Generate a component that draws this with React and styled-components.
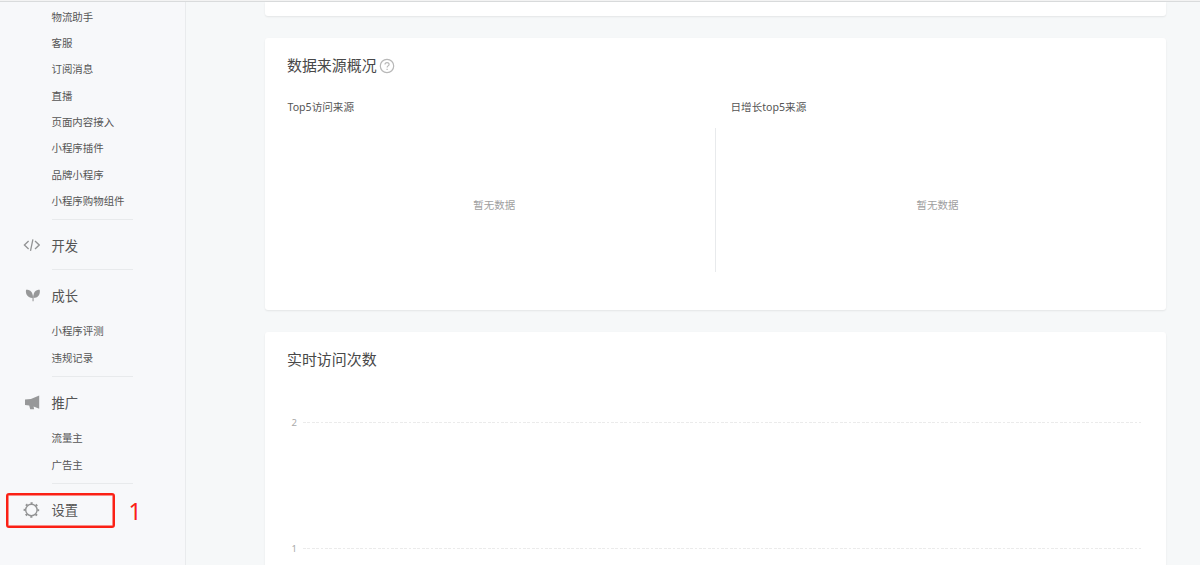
import React from "react";
import styled, { createGlobalStyle } from "styled-components";

const GlobalStyle = createGlobalStyle`
  * {
    box-sizing: border-box;
  }

  body {
    margin: 0;
    background-color: #f6f8f9;
    font-family: "Noto Sans", "Noto Sans CJK SC", sans-serif;
    color: #555;
  }
`;

const Page = styled.div`
  height: 565px;
  overflow: hidden;
  display: flex;
  flex-direction: column;
`;

const TopBar = styled.div`
  flex: none;
  height: 2px;
  background-color: #f3f3f3;
  border-bottom: 1px solid #d9dbdc;
`;

const Body = styled.div`
  flex: 1;
  min-height: 0;
  display: flex;
`;

const Sidebar = styled.nav`
  position: relative;
  flex: none;
  width: 186px;
  background-color: #f7f8fa;
  border-right: 1px solid #e9ebed;
`;

const Group = styled.section`
  margin-left: 51.5px;
  width: 81px;
  padding-top: ${(props) => (props.$first ? "1.5px" : props.$last ? "13px" : "12px")};
  padding-bottom: ${(props) => (props.$plain ? "10.5px" : "4.6px")};
  border-bottom: ${(props) => (props.$last ? "none" : "1px solid #e8eaec")};
`;

const GroupTitle = styled.div`
  display: flex;
  align-items: center;
  height: 26.5px;
  margin-left: -28.5px;
  margin-bottom: ${(props) => (props.$plain ? "0" : "10px")};
  font-size: 13.3px;
  white-space: nowrap;

  svg {
    flex: none;
    width: 17px;
    height: 17px;
    margin-right: 11.5px;
    margin-top: 0.5px;
  }
`;

const Item = styled.div`
  height: 26.36px;
  line-height: 26.36px;
  font-size: 10.45px;
  white-space: nowrap;
`;

const Marker = styled.div`
  position: absolute;
  left: 6px;
  top: 491px;
  width: 109px;
  height: 35px;
  border: 2px solid #fb2015;
  border-radius: 3px;
  box-shadow: inset 0 0 0 0.5px #fb2015;
`;

const MarkerNumber = styled.span`
  position: absolute;
  left: 128.5px;
  top: 493px;
  font-size: 23px;
  line-height: 32px;
  color: #fb2015;
`;

const Main = styled.main`
  flex: 1;
  display: flex;
  flex-direction: column;
  gap: 22px;
  padding: 0 34px 0 79px;
`;

const Card = styled.section`
  flex: none;
  height: ${(props) => props.$height}px;
  padding: ${(props) => (props.$height > 20 ? "14px 22px" : "0")};
  background-color: #fff;
  border-radius: ${(props) => (props.$top ? "0 0 3px 3px" : "3px")};
  box-shadow: 0 1px 2px rgba(0, 0, 0, 0.08);
`;

const CardTitle = styled.h2`
  display: flex;
  align-items: center;
  height: 24px;
  margin: 0;
  font-size: 14.95px;
  font-weight: 400;
  color: #484848;

  svg {
    margin-left: 2.5px;
    margin-top: 3px;
  }
`;

const Sources = styled.div`
  display: grid;
  grid-template-columns: 428px 1fr;
  margin-top: 21px;
`;

const Source = styled.div`
  padding-left: ${(props) => (props.$right ? "15.5px" : "0.5px")};
`;

const SourceName = styled.div`
  height: 20px;
  line-height: 20px;
  font-size: 10.6px;
`;

const Empty = styled.div`
  display: flex;
  align-items: center;
  justify-content: center;
  height: 144px;
  margin-top: 11px;
  margin-left: ${(props) => (props.$divided ? "-15.5px" : "0")};
  padding-top: 9px;
  padding-left: ${(props) => (props.$divided ? "15px" : "0")};
  padding-right: ${(props) => (props.$divided ? "0" : "14px")};
  border-left: ${(props) => (props.$divided ? "1px solid #e8eaec" : "none")};
  font-size: 10.5px;
  color: #a0a0a0;
`;

const Chart = styled.div`
  padding: 44px 3px 0 4.5px;
`;

const GridRow = styled.div`
  display: flex;
  align-items: center;
  height: 16px;
  margin-bottom: 110px;
  font-size: 9.5px;
  color: #aaa;
`;

const Tick = styled.span`
  flex: none;
  width: 11px;
`;

const GridLine = styled.div`
  width: 838px;
  height: 1px;
  background: repeating-linear-gradient(90deg, #ebebeb 0 2.8px, transparent 2.8px 4.4px);
`;

const CodeIcon = () => (
  <svg viewBox="0 0 17 17" fill="none" stroke="#929394" strokeWidth="1.3">
    <path d="M5.6 4 1.4 8l4.2 4M12 4l4.2 4L12 12M9.9 2.3 7.5 13.8" />
  </svg>
);

const SproutIcon = () => (
  <svg viewBox="0 0 17 17" fill="#979899">
    <path d="M3 2.8c4.2-.2 7.1 2.2 6.9 8.1C5.2 11.2 2.3 7.8 3 2.8Z" />
    <path d="M16.7 2.7c.8 4.7-1.4 8.2-6.2 8.3-.5-5 1.6-8.3 6.2-8.3Z" />
    <path d="M9.5 8.5h1.1v5.8H9.5z" />
  </svg>
);

const HornIcon = () => (
  <svg viewBox="0 0 17 17" fill="#979899">
    <path d="M2 5.5 7.9 5l8.3-3.4v13.2L10.6 12.4l.5 2.8H7.2l-1-3.6L2 11Z" />
  </svg>
);

const GearIcon = () => (
  <svg viewBox="0 0 17 17" fill="none" stroke="#929394">
    <circle cx="8.4" cy="8" r="5.7" strokeWidth="1.4" />
    <circle
      cx="8.4"
      cy="8"
      r="6.9"
      strokeWidth="1.8"
      strokeDasharray="2.1 3.32"
      strokeDashoffset="1.05"
    />
  </svg>
);

const HelpIcon = () => (
  <svg width="16" height="16" viewBox="0 0 16 16" fill="none" stroke="#b8b8b8" strokeWidth="1.2">
    <circle cx="8" cy="8" r="6.7" />
    <path d="M6 6.6c0-2.7 4.1-2.6 4.1-.2 0 1.5-2 1.5-2 3.1M8.1 10.7v1.2" />
  </svg>
);

const firstItems = [
  "物流助手",
  "客服",
  "订阅消息",
  "直播",
  "页面内容接入",
  "小程序插件",
  "品牌小程序",
  "小程序购物组件",
];

const groups = [
  { title: "开发", icon: <CodeIcon />, items: [] },
  { title: "成长", icon: <SproutIcon />, items: ["小程序评测", "违规记录"] },
  { title: "推广", icon: <HornIcon />, items: ["流量主", "广告主"] },
  { title: "设置", icon: <GearIcon />, items: [], last: true },
];

const App = () => {
  return (
    <Page>
      <GlobalStyle />
      <TopBar />
      <Body>
        <Sidebar>
          <Group $first>
            {firstItems.map((item) => (
              <Item key={item}>{item}</Item>
            ))}
          </Group>
          {groups.map((group) => (
            <Group key={group.title} $plain={!group.items.length} $last={group.last}>
              <GroupTitle $plain={!group.items.length}>
                {group.icon}
                {group.title}
              </GroupTitle>
              {group.items.map((item) => (
                <Item key={item}>{item}</Item>
              ))}
            </Group>
          ))}
          <Marker />
          <MarkerNumber>1</MarkerNumber>
        </Sidebar>
        <Main>
          <Card $height={14} $top />
          <Card $height={272}>
            <CardTitle>
              数据来源概况
              <HelpIcon />
            </CardTitle>
            <Sources>
              <Source>
                <SourceName>Top5访问来源</SourceName>
                <Empty>暂无数据</Empty>
              </Source>
              <Source $right>
                <SourceName>日增长top5来源</SourceName>
                <Empty $divided>暂无数据</Empty>
              </Source>
            </Sources>
          </Card>
          <Card $height={260}>
            <CardTitle>实时访问次数</CardTitle>
            <Chart>
              <GridRow>
                <Tick>2</Tick>
                <GridLine />
              </GridRow>
              <GridRow>
                <Tick>1</Tick>
                <GridLine />
              </GridRow>
            </Chart>
          </Card>
        </Main>
      </Body>
    </Page>
  );
};

export default App;
